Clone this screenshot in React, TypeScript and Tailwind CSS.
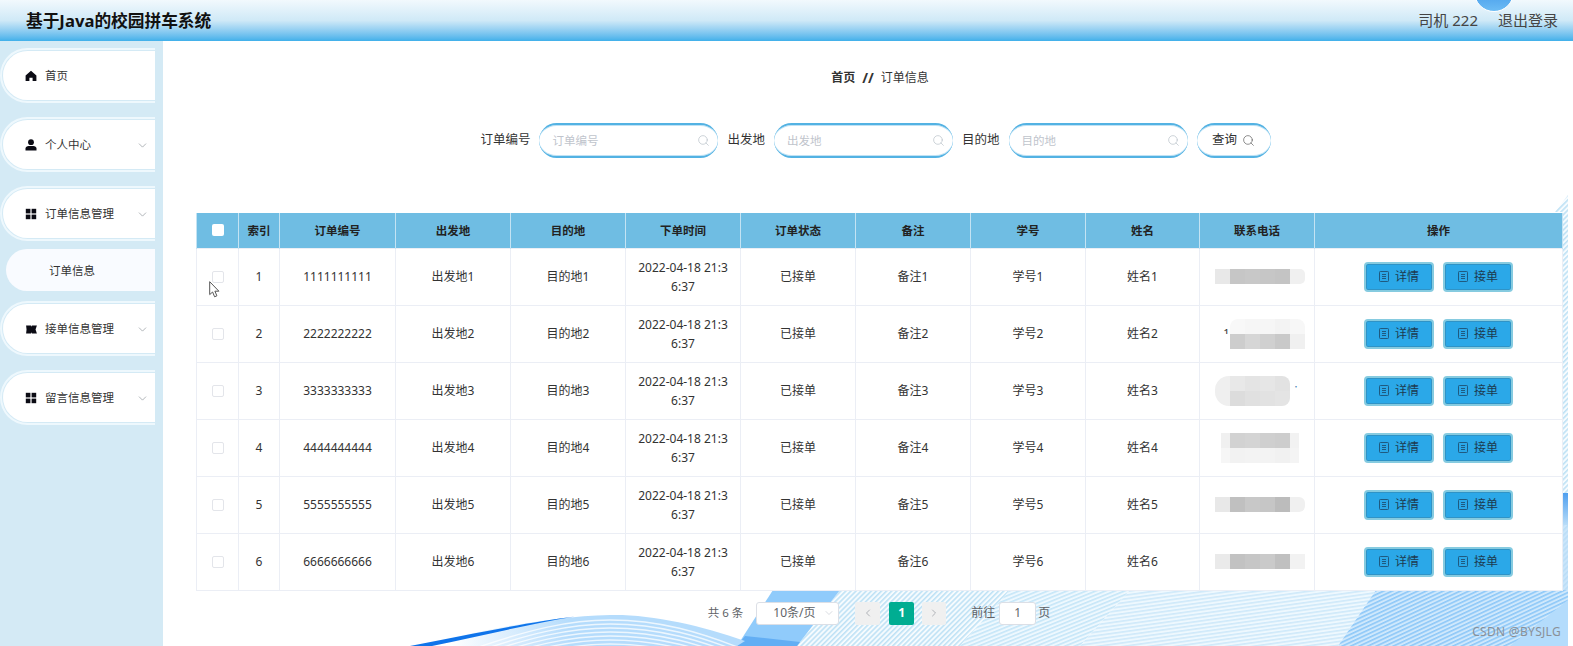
import { ChevronDown, ChevronLeft, ChevronRight, Search } from "lucide-react";

const font = "font-['Noto_Sans','Noto_Sans_CJK_SC',sans-serif]";

function HomeIcon() {
  return (
    <svg viewBox="0 0 12 12" className="h-[12px] w-[12px] shrink-0">
      <path d="M6 .8 11.4 5.6V11H7.6V7.8H4.4V11H.6V5.6Z" fill="#0b0b14" />
    </svg>
  );
}

function UserIcon() {
  return (
    <svg viewBox="0 0 12 12" className="h-[12px] w-[12px] shrink-0">
      <circle cx="6" cy="3.2" r="2.9" fill="#0b0b14" />
      <path d="M.5 11.5V9.6C.5 7.9 2 7 3.6 7h4.8c1.6 0 3.1.9 3.1 2.6v1.9Z" fill="#0b0b14" />
    </svg>
  );
}

function GridIcon() {
  return (
    <svg viewBox="0 0 12 12" className="h-[12px] w-[12px] shrink-0">
      <rect x=".8" y=".8" width="4.6" height="4.6" fill="#0b0b14" />
      <rect x="6.6" y=".8" width="4.6" height="4.6" fill="#0b0b14" />
      <rect x=".8" y="6.6" width="4.6" height="4.6" fill="#0b0b14" />
      <rect x="6.6" y="6.6" width="4.6" height="4.6" fill="#0b0b14" />
    </svg>
  );
}

function TicketIcon() {
  return (
    <svg viewBox="0 0 13 10" className="h-[9px] w-[13px] shrink-0">
      <path d="M.5.5H6L6.5 2 7 .5H12.5L11 5l1.5 4.5H7L6.5 8 6 9.5H.5L1 5Z" fill="#0b0b14" />
    </svg>
  );
}

function DocIcon() {
  return (
    <svg viewBox="0 0 10 11" fill="none" stroke="#1f5a80" strokeWidth="1" className="h-[11px] w-[10px] shrink-0">
      <rect x=".5" y=".5" width="9" height="10" rx=".8" />
      <path d="M3 3.5h4M3 5.5h4M3 7.5h4" />
    </svg>
  );
}

function MenuItem({ icon, label, arrow }: { icon: React.ReactNode; label: string; arrow?: boolean }) {
  return (
    <div className="h-[55px] w-[155px] rounded-l-full border-2 border-r-0 border-[#eef8fd] py-[1px] pl-[1px]">
      <div className="flex h-full items-center rounded-l-full bg-white pb-[1px] pl-[22px] pr-[6px] pt-[2px] text-[11.5px] text-[#333]">
        <span className="flex w-[20px] items-center">{icon}</span>
        <span className="flex-1">{label}</span>
        {arrow && <ChevronDown className="size-[13px] text-[#7d838a]" strokeWidth={1.1} />}
      </div>
    </div>
  );
}

function SearchField({ label }: { label: string }) {
  return (
    <div className="flex items-center gap-[9px]">
      <span className="text-[12.5px] text-[#333]">{label}</span>
      <div className="flex h-[35px] w-[179px] items-center rounded-[18px] border-y-[2px] border-[#53b2e3] bg-white pl-[13px] pr-[8px] shadow-[inset_0_1px_0_#bfe2f5,inset_0_-1px_0_#bfe2f5]">
        <span className="flex-1 text-[11.5px] text-[#c0c4cc]">{label}</span>
        <Search className="size-[13px] text-[#b4bcc4]" strokeWidth={1.2} />
      </div>
    </div>
  );
}

const phones = [
  { rows: [["bg-[#e8e8e8]", "bg-[#c6c6c6]", "bg-[#c8c8c8]", "bg-[#c6c6c6]", "bg-[#c4c4c4]", "bg-[#f0f0f0] rounded-r-[5px]"]] },
  { rows: [["bg-white", "bg-[#f8f8f8] rounded-tl-[8px]", "bg-[#f6f6f6]", "bg-[#f6f6f6]", "bg-[#f3f3f3]", "bg-[#f7f7f7] rounded-tr-[8px]"], ["bg-white", "bg-[#cdcdcd]", "bg-[#d6d6d6]", "bg-[#d0d0d0]", "bg-[#c9c9c9]", "bg-[#f0f0f0]"]] },
  { rows: [["bg-[#efefef] rounded-tl-[14px]", "bg-[#e8e8e8]", "bg-[#e4e4e4]", "bg-[#e6e6e6]", "bg-[#e2e2e2] rounded-tr-[8px]", "bg-white"], ["bg-[#efefef] rounded-bl-[14px]", "bg-[#dcdcdc]", "bg-[#e0e0e0]", "bg-[#e2e2e2]", "bg-[#e4e4e4] rounded-br-[8px]", "bg-white"]] },
  { rows: [["border-l-[6px] border-white bg-[#f0f0f0]", "bg-[#d2d2d2]", "bg-[#d4d4d4]", "bg-[#cfcfcf]", "bg-[#cdcdcd]", "border-r-[6px] border-white bg-[#f2f2f2]"], ["border-l-[6px] border-white bg-[#f6f6f6]", "bg-[#f2f2f2]", "bg-[#f3f3f3]", "bg-[#f3f3f3]", "bg-[#f1f1f1]", "border-r-[6px] border-white bg-[#f4f4f4]"]] },
  { rows: [["bg-[#e8e8e8]", "bg-[#c0c0c0]", "bg-[#c8c8c8]", "bg-[#c6c6c6]", "bg-[#bcbcbc]", "bg-[#f0f0f0] rounded-r-[6px]"]] },
  { rows: [["bg-[#eaeaea]", "bg-[#c2c2c2]", "bg-[#c6c6c6]", "bg-[#cacaca]", "bg-[#c0c0c0]", "bg-[#f2f2f2]"]] },
];

function Phone({ index }: { index: number }) {
  return (
    <div className="ml-[15px] w-[90px]">
      {phones[index].rows.map((row, r) => (
        <div key={r} className="flex">
          {row.map((c, i) => (
            <div key={i} className={`h-[15px] w-[15px] text-[11px] leading-[15px] ${c}`}>
              {index === 1 && r === 0 && i === 0 ? <span className="ml-[8px] block leading-[28px]">1</span> : null}
              {index === 2 && r === 0 && i === 5 ? <span className="-ml-[3px] block leading-[24px] text-[#2a6ea8]">;</span> : null}
            </div>
          ))}
        </div>
      ))}
    </div>
  );
}

function ActionButton({ label }: { label: string }) {
  return (
    <button className="flex h-[30px] w-[70px] items-center justify-center gap-[6px] rounded-[4px] border-2 border-[#86cbe0] bg-[#2ba8e8] text-[12px] text-[#1d3b50] shadow-[inset_0_0_0_1px_#2f93c6]">
      <DocIcon />
      {label}
    </button>
  );
}

const waveLines = [4, 8, 12, 16, 20, 24, 28];

function Backdrop() {
  return (
    <svg viewBox="163 41 1405 605" className="absolute inset-0 h-full w-full">
      <defs>
        <pattern id="hatch" width="3.6" height="3.6" patternUnits="userSpaceOnUse" patternTransform="rotate(-45)">
          <rect width="3.6" height="3.6" fill="#f6fbfe" />
          <rect width="3.6" height="1.6" fill="#bfe2f5" />
        </pattern>
        <pattern id="hatch15" width="5" height="3.6" patternUnits="userSpaceOnUse" patternTransform="rotate(-22)">
          <rect width="5" height="3.6" fill="#eef8fe" />
          <rect width="5" height="1.6" fill="#c6e6f8" />
        </pattern>
        <pattern id="hatch2" width="6" height="3.6" patternUnits="userSpaceOnUse" patternTransform="rotate(-8)">
          <rect width="6" height="3.6" fill="#eef8fe" />
          <rect width="6" height="1.6" fill="#cfe9fa" />
        </pattern>
        <pattern id="hatch3" width="6" height="3.6" patternUnits="userSpaceOnUse" patternTransform="rotate(-25)">
          <rect width="6" height="3.6" fill="#cfe8fc" />
          <rect width="6" height="1.6" fill="#8ec8f8" />
        </pattern>
        <linearGradient id="waveFade" x1="450" x2="570" y1="0" y2="0" gradientUnits="userSpaceOnUse">
          <stop offset="0" stopColor="#ffffff" />
          <stop offset="1" stopColor="#b5dcfc" />
        </linearGradient>
        <linearGradient id="stripFade" x1="0" x2="0" y1="493" y2="525" gradientUnits="userSpaceOnUse">
          <stop offset="0" stopColor="#4f9fef" />
          <stop offset="1" stopColor="#b8dcf8" />
        </linearGradient>
        <clipPath id="waveClip">
          <path d="M410 646 C480 632 540 617 610 615 C650 614 700 625 745 641 L737 646Z" />
        </clipPath>
      </defs>
      <rect x="163" y="41" width="1405" height="605" fill="#fff" />
      <path d="M797 646 840 590H1010L960 646Z" fill="url(#hatch)" />
      <path d="M960 646 1010 590H1130L1080 646Z" fill="url(#hatch15)" />
      <path d="M1080 646 1130 590H1376L1338 646Z" fill="url(#hatch2)" />
      <path d="M1338 646 1376 590H1568V646Z" fill="url(#hatch3)" />
      <path d="M1510 646 1568 600V646Z" fill="#b4dcfc" />
      <path d="M737 646 773 590H840L797 646Z" fill="#90cbfb" />
      <path d="M737 646 745 636 800 642 797 646Z" fill="#62aef4" />
      <path d="M1562 212H1555L1568 195V590H1562Z" fill="url(#hatch)" />
      <path d="M1562 493H1568V525H1562Z" fill="url(#stripFade)" />
      <path d="M1562 525H1568V590H1562Z" fill="#b8dcf8" opacity=".7" />
      <path d="M410 646 C480 632 540 617 610 615 C650 614 700 625 745 641 L737 646Z" fill="url(#waveFade)" />
      <g clipPath="url(#waveClip)">
        {waveLines.map((d) => (
          <path
            key={d}
            d="M470 646 C530 625 570 616 610 616 C660 616 700 628 745 646"
            transform={`translate(0 ${d})`}
            fill="none"
            stroke="#ffffff"
            strokeOpacity=".75"
            strokeWidth="1.4"
          />
        ))}
      </g>
      <path d="M410 646 C470 634 530 622 575 616.5 C530 624 480 636 432 646Z" fill="#0f74ea" />
    </svg>
  );
}

export default function App() {
  const colWidths = ["w-[42px]", "w-[41px]", "w-[116px]", "w-[115px]", "w-[115px]", "w-[115px]", "w-[115px]", "w-[115px]", "w-[115px]", "w-[114px]", "w-[115px]", "w-[248px]"];
  const headers = ["索引", "订单编号", "出发地", "目的地", "下单时间", "订单状态", "备注", "学号", "姓名", "联系电话", "操作"];
  const rows = [1, 2, 3, 4, 5, 6];
  const td = "border border-[#ebeef5] text-center text-[12px] text-[#333]";

  return (
    <div className={`relative flex h-[646px] w-[1573px] flex-col overflow-hidden bg-white ${font}`}>
      <header className="relative flex h-[41px] shrink-0 items-center justify-between bg-gradient-to-b from-[#f2f9fd] via-[#cfe9f7] to-[#3fb0ea] pl-[26px] pr-[15px]">
        <div className="text-[16.7px] font-bold text-[#111]">基于Java的校园拼车系统</div>
        <div className="flex items-center gap-[20px] text-[15px] text-[#444]">
          <span>司机 222</span>
          <span>退出登录</span>
        </div>
        <div className="absolute right-[59px] top-[-28px] h-[40px] w-[40px] rounded-full border border-white bg-gradient-to-b from-[#1f7fe0] to-[#6cbcf5]" />
      </header>
      <div className="flex min-h-0 flex-1">
        <aside className="flex w-[163px] shrink-0 flex-col bg-[#d4eaf5] pt-[7px]">
          <MenuItem icon={<HomeIcon />} label="首页" />
          <div className="mt-[14px]">
            <MenuItem icon={<UserIcon />} label="个人中心" arrow />
          </div>
          <div className="mt-[14px]">
            <MenuItem icon={<GridIcon />} label="订单信息管理" arrow />
          </div>
          <div className="ml-[6px] mt-[8px] flex h-[42px] w-[149px] items-center rounded-l-full bg-[#f9fbff] pl-[43px] pt-[1px] text-[11.5px] text-[#333]">
            订单信息
          </div>
          <div className="mt-[10px]">
            <MenuItem icon={<TicketIcon />} label="接单信息管理" arrow />
          </div>
          <div className="mt-[14px]">
            <MenuItem icon={<GridIcon />} label="留言信息管理" arrow />
          </div>
        </aside>
        <main className="relative w-[1405px] shrink-0 pl-[33px] pr-[6px]">
          <Backdrop />
          <div className="relative">
            <div className="flex h-[72px] items-center justify-center gap-[7px] pl-[2px] pt-[2px] text-[12px] text-[#333]">
              <span className="font-bold">首页</span>
              <span className="text-[14px] font-bold leading-none">//</span>
              <span>订单信息</span>
            </div>
            <div className="mt-[10px] flex justify-center gap-[9px] pr-[7px]">
              <SearchField label="订单编号" />
              <SearchField label="出发地" />
              <SearchField label="目的地" />
              <button className="flex h-[35px] w-[74px] items-center justify-center gap-[5px] rounded-[18px] border-y-[2px] border-[#53b2e3] bg-white text-[12.5px] text-[#333] shadow-[inset_0_1px_0_#bfe2f5,inset_0_-1px_0_#bfe2f5]">
                查询
                <Search className="size-[13px] text-[#444]" strokeWidth={1.1} />
              </button>
            </div>
            <table className="mt-[55px] w-[1366px] table-fixed border-collapse bg-white">
              <colgroup>
                {colWidths.map((w, i) => (
                  <col key={i} className={w} />
                ))}
              </colgroup>
              <thead>
                <tr className="h-[35px] bg-[#6fbde3]">
                  <th className="border-x border-[#c4e3f3]">
                    <div className="mx-auto h-[12px] w-[12px] rounded-[2px] bg-white" />
                  </th>
                  {headers.map((h) => (
                    <th key={h} className="border-x border-[#c4e3f3] text-center text-[11.5px] font-bold text-[#222]">
                      {h}
                    </th>
                  ))}
                </tr>
              </thead>
              <tbody>
                {rows.map((n, i) => (
                  <tr key={n} className="h-[57px]">
                    <td className={td}>
                      <div className="mx-auto h-[12px] w-[12px] rounded-[2px] border border-[#e3e5ea] bg-white" />
                    </td>
                    <td className={td}>{n}</td>
                    <td className={td}>{String(n).repeat(10)}</td>
                    <td className={td}>出发地{n}</td>
                    <td className={td}>目的地{n}</td>
                    <td className={`${td} leading-[19px]`}>
                      2022-04-18 21:3
                      <br />
                      6:37
                    </td>
                    <td className={td}>已接单</td>
                    <td className={td}>备注{n}</td>
                    <td className={td}>学号{n}</td>
                    <td className={td}>姓名{n}</td>
                    <td className={td}>
                      <Phone index={i} />
                    </td>
                    <td className={td}>
                      <div className="flex justify-center gap-[9px]">
                        <ActionButton label="详情" />
                        <ActionButton label="接单" />
                      </div>
                    </td>
                  </tr>
                ))}
              </tbody>
            </table>
            <div className="mt-[11px] flex h-[23px] items-center justify-center text-[12px] text-[#606266]">
              <span className="text-[11.5px]">共 6 条</span>
              <div className="ml-[13px] flex h-[23px] w-[83px] items-center rounded-[3px] border border-[#dcdfe6] bg-white pl-[16px] pr-[3px]">
                <span className="flex-1">10条/页</span>
                <ChevronDown className="size-[12px] text-[#c0c4cc]" strokeWidth={1.2} />
              </div>
              <div className="ml-[16px] flex h-[23px] w-[25px] items-center justify-center rounded-[2px] bg-[#f0f0f0]">
                <ChevronLeft className="size-[12px] text-[#b0b3b8]" strokeWidth={2} />
              </div>
              <div className="ml-[9px] flex h-[23px] w-[25px] items-center justify-center rounded-[2px] bg-[#00ad92] font-bold text-white">
                1
              </div>
              <div className="ml-[8px] flex h-[23px] w-[24px] items-center justify-center rounded-[2px] bg-[#f0f0f0]">
                <ChevronRight className="size-[12px] text-[#b0b3b8]" strokeWidth={2} />
              </div>
              <span className="ml-[25px]">前往</span>
              <div className="ml-[4px] flex h-[23px] w-[37px] items-center justify-center rounded-[3px] border border-[#dcdfe6] bg-white">
                1
              </div>
              <span className="ml-[2px]">页</span>
            </div>
          </div>
          <div className="absolute bottom-[5px] right-[7px] text-[12px] tracking-[0.3px] text-[#8a9097]">
            CSDN @BYSJLG
          </div>
        </main>
      </div>
      <svg viewBox="0 0 11 17" className="absolute left-[209px] top-[281px] h-[17px] w-[11px]">
        <path d="M.7.7V13.6L3.6 11 5.6 15.8 7.9 14.8 5.9 10.2H9.9Z" fill="#fff" stroke="#555" strokeWidth="1" />
      </svg>
    </div>
  );
}
